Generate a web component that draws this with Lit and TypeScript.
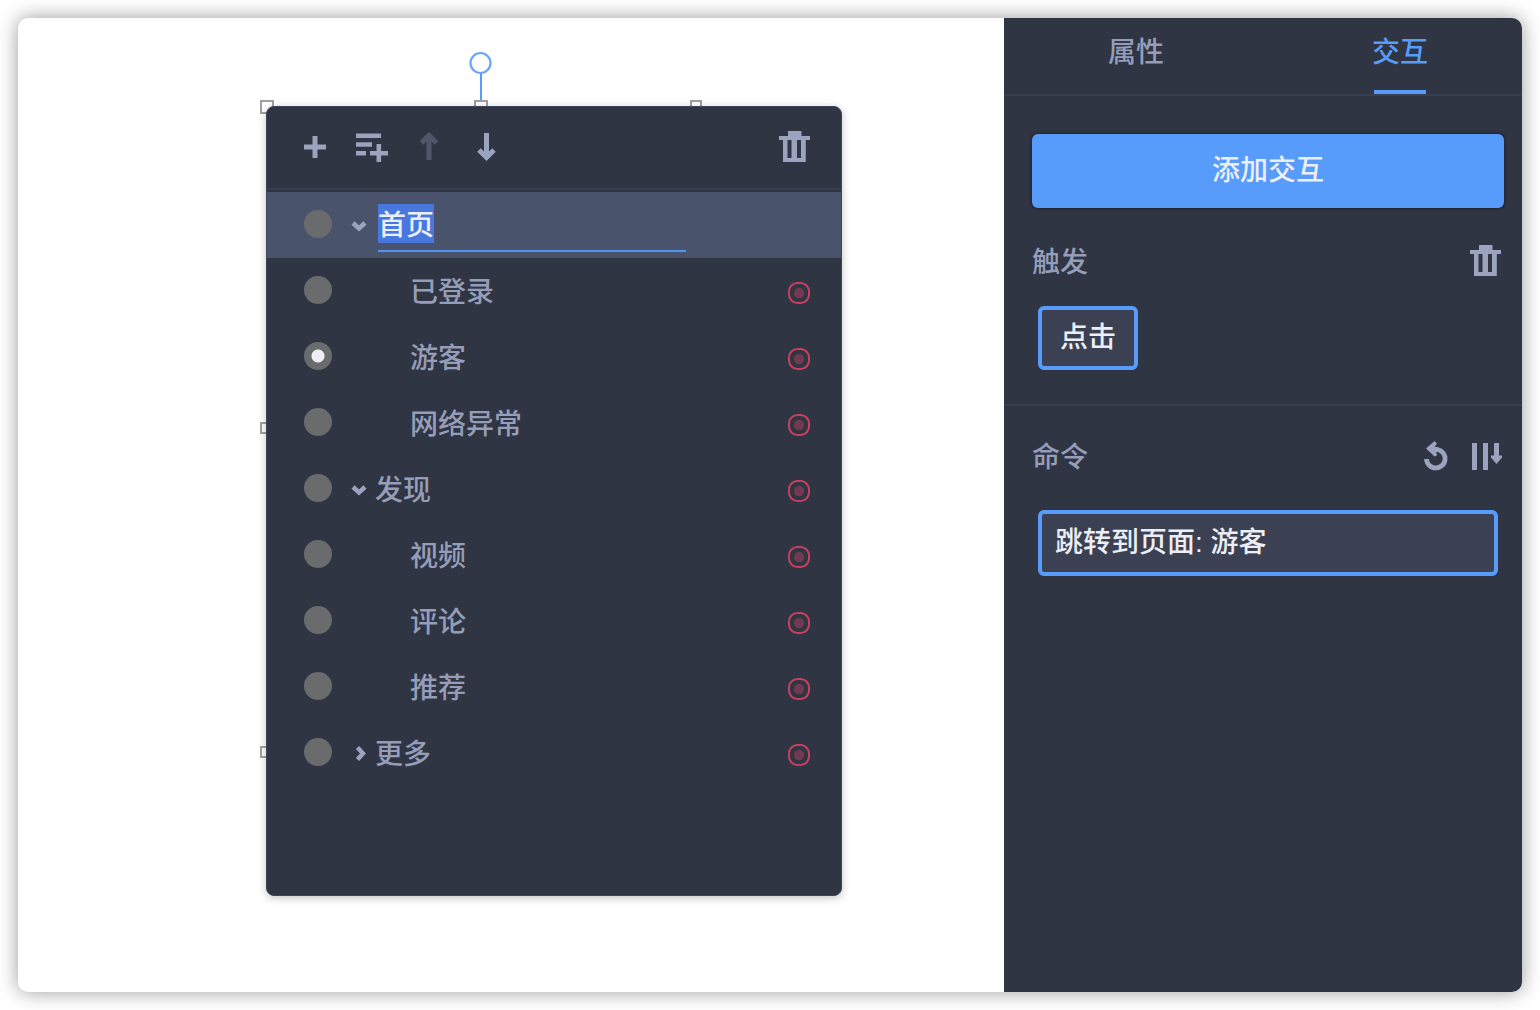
import { LitElement, html, svg, css, nothing } from "lit";
import { customElement, property, query, state } from "lit/decorators.js";
import { classMap } from "lit/directives/class-map.js";

const icons = {
  plus: svg`<path d="M5 16h22M16 5v22" stroke="currentColor" stroke-width="5" fill="none"/>`,
  addList: svg`<path d="M0 4.700h25M0 13.500h16M0 22.300h10M14 22.300h18M22.800 13v18" stroke="currentColor" stroke-width="4.600" fill="none"/>`,
  up: svg`<path d="M16 29V5M8.500 12L16 4.500l7.500 7.500" stroke="currentColor" stroke-width="5" fill="none"/>`,
  down: svg`<path d="M16.500 2v24M9 19l7.500 7.500L24 19" stroke="currentColor" stroke-width="5" fill="none"/>`,
  trash: svg`<path fill-rule="evenodd" fill="currentColor" d="M9 0h13.500v5H31v4h-4.200v22H4V9H0V5h9zM8.500 9v18h4V9zM18 9v18h4V9z"/>`,
  undo: svg`<path d="M13 9.500h4.500a9.300 9.300 0 1 1-11 9.500" stroke="currentColor" stroke-width="4.800" fill="none"/><path fill="currentColor" d="M6 8.500L14.500 1l2.500 2.500-2 3 2 9-2.500 1z"/>`,
  sort: svg`<path d="M4.500 3v27M15.500 3v27M26.500 3v16" stroke="currentColor" stroke-width="5" fill="none"/><path fill="currentColor" d="M21 15.500h11v2l-5.500 6.500-5.500-6.500z"/>`,
};

const icon = (name: keyof typeof icons) =>
  html`<svg viewBox="0 0 32 32" width="32" height="32" aria-hidden="true">${icons[name]}</svg>`;

interface PageNode {
  id: string;
  name: string;
  child?: boolean;
  open?: boolean;
}

const PAGES: PageNode[] = [
  { id: "home", name: "首页", open: true },
  { id: "signed-in", name: "已登录", child: true },
  { id: "guest", name: "游客", child: true },
  { id: "offline", name: "网络异常", child: true },
  { id: "discover", name: "发现", open: true },
  { id: "video", name: "视频", child: true },
  { id: "comment", name: "评论", child: true },
  { id: "recommend", name: "推荐", child: true },
  { id: "more", name: "更多", open: false },
];

const controls = css`
  * {
    box-sizing: border-box;
  }
  button,
  input {
    margin: 0;
    padding: 0;
    border: 0;
    background: none;
    color: inherit;
    font: inherit;
    outline: none;
  }
  svg {
    display: block;
  }
  .icon {
    display: block;
    width: 32px;
    height: 32px;
    color: #9ba3be;
  }
  .icon:disabled {
    color: #50576a;
  }
`;

@customElement("page-tree")
export class PageTree extends LitElement {
  @property() editing = "home";
  @state() private current = "guest";
  @query(".edit") private field?: HTMLInputElement;

  static styles = [
    controls,
    css`
      :host {
        display: block;
        box-sizing: border-box;
        border: 1px solid #3d455a;
        border-radius: 8px;
        background: #2f3542;
        color: #959db8;
        box-shadow: 0 2px 8px rgba(0, 0, 0, 0.24);
        overflow: hidden;
      }
      .toolbar {
        display: flex;
        gap: 25px;
        padding: 24px 30px 25px 32px;
        margin-bottom: 2px;
        border-bottom: 2px solid #383e50;
      }
      .end {
        margin-left: auto;
      }
      .list {
        list-style: none;
        margin: 0;
        padding: 0;
      }
      .row {
        display: flex;
        align-items: center;
        height: 66px;
        padding: 0 31px 0 37px;
      }
      .selected {
        background: #49536b;
      }
      .radio {
        appearance: none;
        width: 28px;
        height: 28px;
        margin-bottom: 2px;
        border-radius: 50%;
        background: #6a6b6c;
      }
      .radio:checked {
        background: radial-gradient(circle, #eeeff4 6px, #6a6b6c 7px);
      }
      .fold {
        width: 18px;
        height: 18px;
        margin: 2px 6px 0 18px;
        color: #9ba3be;
      }
      .name {
        flex: 1;
        margin: 4px 0 0 1px;
      }
      .child {
        margin-left: 78px;
      }
      .edit {
        width: 308px;
        height: 48px;
        margin: 6px 0 0 4px;
        padding: 2px 0 10px;
        border-bottom: 2px solid #5293f2;
        color: #eceef5;
      }
      .edit::selection {
        background: #4877dd;
        color: #eceef5;
      }
      .mark {
        width: 22px;
        height: 22px;
        margin-top: 4px;
      }
    `,
  ];

  firstUpdated() {
    this.field?.focus();
    this.field?.select();
  }

  render() {
    return html`
      <div class="toolbar">
        <button class="icon" aria-label="添加页面">${icon("plus")}</button>
        <button class="icon" aria-label="添加子页面">${icon("addList")}</button>
        <button class="icon" aria-label="上移" disabled>${icon("up")}</button>
        <button class="icon" aria-label="下移">${icon("down")}</button>
        <button class="icon end" aria-label="删除页面">${icon("trash")}</button>
      </div>
      <ul class="list">
        ${PAGES.map((page) => this.row(page))}
      </ul>
    `;
  }

  private row(page: PageNode) {
    const editing = page.id === this.editing;
    return html`<li class=${classMap({ row: true, selected: editing })}>
      <input
        class="radio"
        type="radio"
        name="page"
        id=${page.id}
        aria-label=${page.name}
        .checked=${page.id === this.current}
        @change=${() => (this.current = page.id)}
      />
      ${page.child
        ? nothing
        : html`<button class="fold" aria-label="展开或收起" aria-expanded=${page.open ? "true" : "false"}>
            <svg viewBox="0 0 18 18" width="18" height="18" aria-hidden="true">
              <path
                d=${page.open ? "M3 6l6 5.500L15 6" : "M7.500 2.500L13 8.500l-5.500 6"}
                fill="none"
                stroke="currentColor"
                stroke-width="4.500"
              />
            </svg>
          </button>`}
      ${editing
        ? html`<input class="edit" type="text" aria-label="页面名称" .value=${page.name} />`
        : html`<label class=${classMap({ name: true, child: !!page.child })} for=${page.id}>${page.name}</label>
            <button class="mark" aria-label="交互">
              <svg viewBox="0 0 22 22" width="22" height="22" aria-hidden="true">
                <rect x="1" y="1" width="20" height="20" rx="8.500" fill="none" stroke="#c93f60" stroke-width="2" />
                <circle cx="11" cy="11" r="5.200" fill="#713a50" />
              </svg>
            </button>`}
    </li>`;
  }
}

@customElement("inspector-panel")
export class InspectorPanel extends LitElement {
  static styles = [
    controls,
    css`
      :host {
        display: block;
        background: #2f3542;
        color: #959db8;
      }
      .tabs {
        display: grid;
        grid-template-columns: repeat(2, 264px);
        height: 78px;
        border-bottom: 2px solid #383e50;
        overflow: hidden;
      }
      .tab {
        display: flex;
        flex-direction: column;
        align-items: center;
        justify-content: space-between;
        padding-top: 18px;
      }
      .tab::after {
        content: "";
        width: 52px;
        height: 4px;
      }
      .active {
        color: #579bfb;
      }
      .active::after {
        background: #579bfb;
      }
      .section {
        padding: 38px 18px 34px 28px;
        border-bottom: 2px solid #383e50;
      }
      .commands {
        padding-top: 30px;
        border-bottom: 0;
      }
      .primary {
        display: block;
        width: 100%;
        height: 74px;
        margin-bottom: 33px;
        border-radius: 6px;
        background: #579bfb;
        color: #eceef5;
        box-shadow: 0 0 3px 1px rgba(20, 24, 34, 0.6);
      }
      .head {
        display: flex;
        align-items: center;
        gap: 18px;
        height: 40px;
        padding-right: 2px;
      }
      .title {
        flex: 1;
        margin: 4px 0 0;
        font-size: inherit;
        font-weight: inherit;
      }
      .chip {
        display: block;
        height: 64px;
        margin: 25px 6px 0;
        padding: 0 18px;
        border: 4px solid #579bfb;
        border-radius: 6px;
        background: #3b4153;
        color: #eceef5;
      }
      .command {
        width: calc(100% - 12px);
        height: 66px;
        margin-top: 34px;
        padding: 0 13px;
        text-align: left;
      }
    `,
  ];

  render() {
    return html`
      <div class="tabs" role="tablist">
        <button class="tab" role="tab" aria-selected="false">属性</button>
        <button class="tab active" role="tab" aria-selected="true">交互</button>
      </div>
      <section class="section">
        <button class="primary">添加交互</button>
        <div class="head">
          <h2 class="title">触发</h2>
          <button class="icon" aria-label="删除交互">${icon("trash")}</button>
        </div>
        <button class="chip">点击</button>
      </section>
      <section class="section commands">
        <div class="head">
          <h2 class="title">命令</h2>
          <button class="icon" aria-label="重置">${icon("undo")}</button>
          <button class="icon" aria-label="排序">${icon("sort")}</button>
        </div>
        <button class="chip command">跳转到页面: 游客</button>
      </section>
    `;
  }
}

@customElement("app-root")
export class AppRoot extends LitElement {
  static styles = css`
    * {
      box-sizing: border-box;
    }
    :host {
      display: flex;
      min-height: 100vh;
      box-sizing: border-box;
      padding: 18px;
      background: #fff;
      font: 500 28px/34px "Liberation Sans", "Noto Sans CJK SC", sans-serif;
    }
    .window {
      display: flex;
      flex: 1;
      border-radius: 10px;
      background: #fff;
      box-shadow: 0 0 20px rgba(0, 0, 0, 0.4);
      overflow: hidden;
    }
    .canvas {
      position: relative;
      flex: 1;
    }
    .inspector {
      flex: 0 0 518px;
      min-width: 0;
    }
    .widget {
      position: absolute;
      left: 248px;
      top: 88px;
      width: 576px;
      height: 790px;
    }
    .tree {
      position: relative;
      height: 100%;
    }
    .handle {
      position: absolute;
      width: 14px;
      height: 14px;
      border: 2px solid #a0a0a0;
      background: #fff;
    }
    .corner {
      left: -6px;
      top: -6px;
    }
    .top {
      left: 208px;
      top: -6px;
    }
    .top-end {
      left: 424px;
      top: -6px;
      width: 12px;
    }
    .side {
      left: -6px;
      top: 316px;
      height: 12px;
    }
    .side-end {
      left: -6px;
      top: 640px;
      height: 12px;
    }
    .rotate {
      position: absolute;
      left: 202px;
      top: -55px;
    }
  `;

  render() {
    return html`
      <main class="window">
        <div class="canvas">
          <div class="widget">
            <svg class="rotate" viewBox="0 0 24 50" width="24" height="50" aria-hidden="true">
              <circle cx="12.500" cy="12" r="10" fill="#fff" stroke="#6aa7fb" stroke-width="2.200" />
              <path d="M13 22v27" stroke="#579bfb" stroke-width="2" />
            </svg>
            <span class="handle corner"></span>
            <span class="handle top"></span>
            <span class="handle top-end"></span>
            <span class="handle side"></span>
            <span class="handle side-end"></span>
            <page-tree class="tree"></page-tree>
          </div>
        </div>
        <inspector-panel class="inspector"></inspector-panel>
      </main>
    `;
  }
}
